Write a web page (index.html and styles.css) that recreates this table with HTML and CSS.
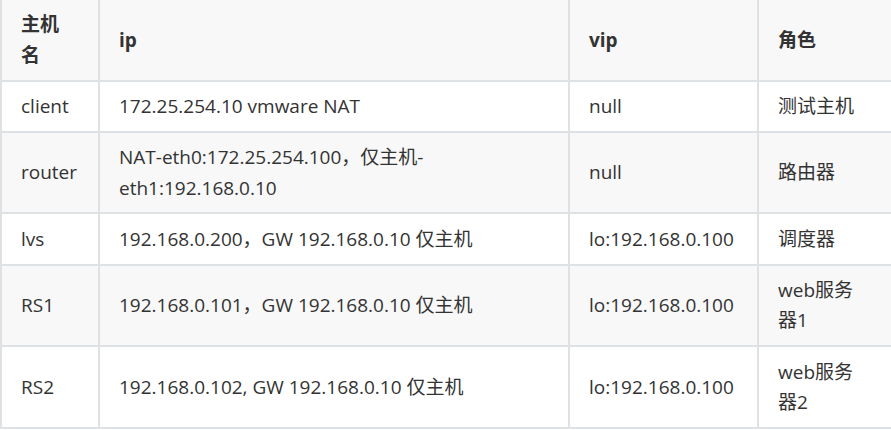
FILE: index.html
```html
<!DOCTYPE html>
<html lang="zh-CN">
<head>
<meta charset="utf-8">
<title>hosts</title>
<link rel="stylesheet" href="styles.css">
</head>
<body>
<table class="hosts">
  <colgroup>
    <col class="c1"><col class="c2"><col class="c3"><col class="c4">
  </colgroup>
  <thead>
    <tr><th>主机名</th><th>ip</th><th>vip</th><th>角色</th></tr>
  </thead>
  <tbody>
    <tr><td>client</td><td>172.25.254.10 vmware NAT</td><td>null</td><td>测试主机</td></tr>
    <tr><td>router</td><td>NAT-eth0:172.25.254.100，仅主机-eth1:192.168.0.10</td><td>null</td><td>路由器</td></tr>
    <tr><td>lvs</td><td>192.168.0.200，GW 192.168.0.10 仅主机</td><td>lo:192.168.0.100</td><td>调度器</td></tr>
    <tr><td>RS1</td><td>192.168.0.101，GW 192.168.0.10 仅主机</td><td>lo:192.168.0.100</td><td>web服务器1</td></tr>
    <tr><td>RS2</td><td>192.168.0.102, GW 192.168.0.10 仅主机</td><td>lo:192.168.0.100</td><td>web服务器2</td></tr>
  </tbody>
</table>
</body>
</html>
```
FILE: styles.css
```css
html, body {
  margin: 0;
  padding: 0;
  overflow: hidden;
  background: #ffffff;
}

.hosts {
  border-collapse: separate;
  border-spacing: 0;
  table-layout: fixed;
  width: 910px;
  font-family: "Open Sans", "Noto Sans CJK SC", sans-serif;
  font-size: 19px;
  line-height: 30.4px;
  color: #333333;
}

.c1 { width: 100px; }
.c2 { width: 470px; }
.c3 { width: 189px; }
.c4 { width: 151px; }

.hosts th,
.hosts td {
  box-sizing: border-box;
  padding: 9.4px 18px 9.4px 19px;
  border-right: 2px solid #dfe2e5;
  border-bottom: 2px solid #dfe2e5;
  text-align: left;
  vertical-align: middle;
  word-wrap: break-word;
}

.hosts th:first-child,
.hosts td:first-child {
  border-left: 2px solid #dfe2e5;
  padding-right: 20.4px;
}

.hosts th:last-child,
.hosts td:last-child {
  padding-right: 40px;
}

.hosts th {
  font-weight: 700;
  background: #f8f8f8;
}

.hosts tbody tr:nth-child(2n) {
  background: #f8f8f8;
}
```
